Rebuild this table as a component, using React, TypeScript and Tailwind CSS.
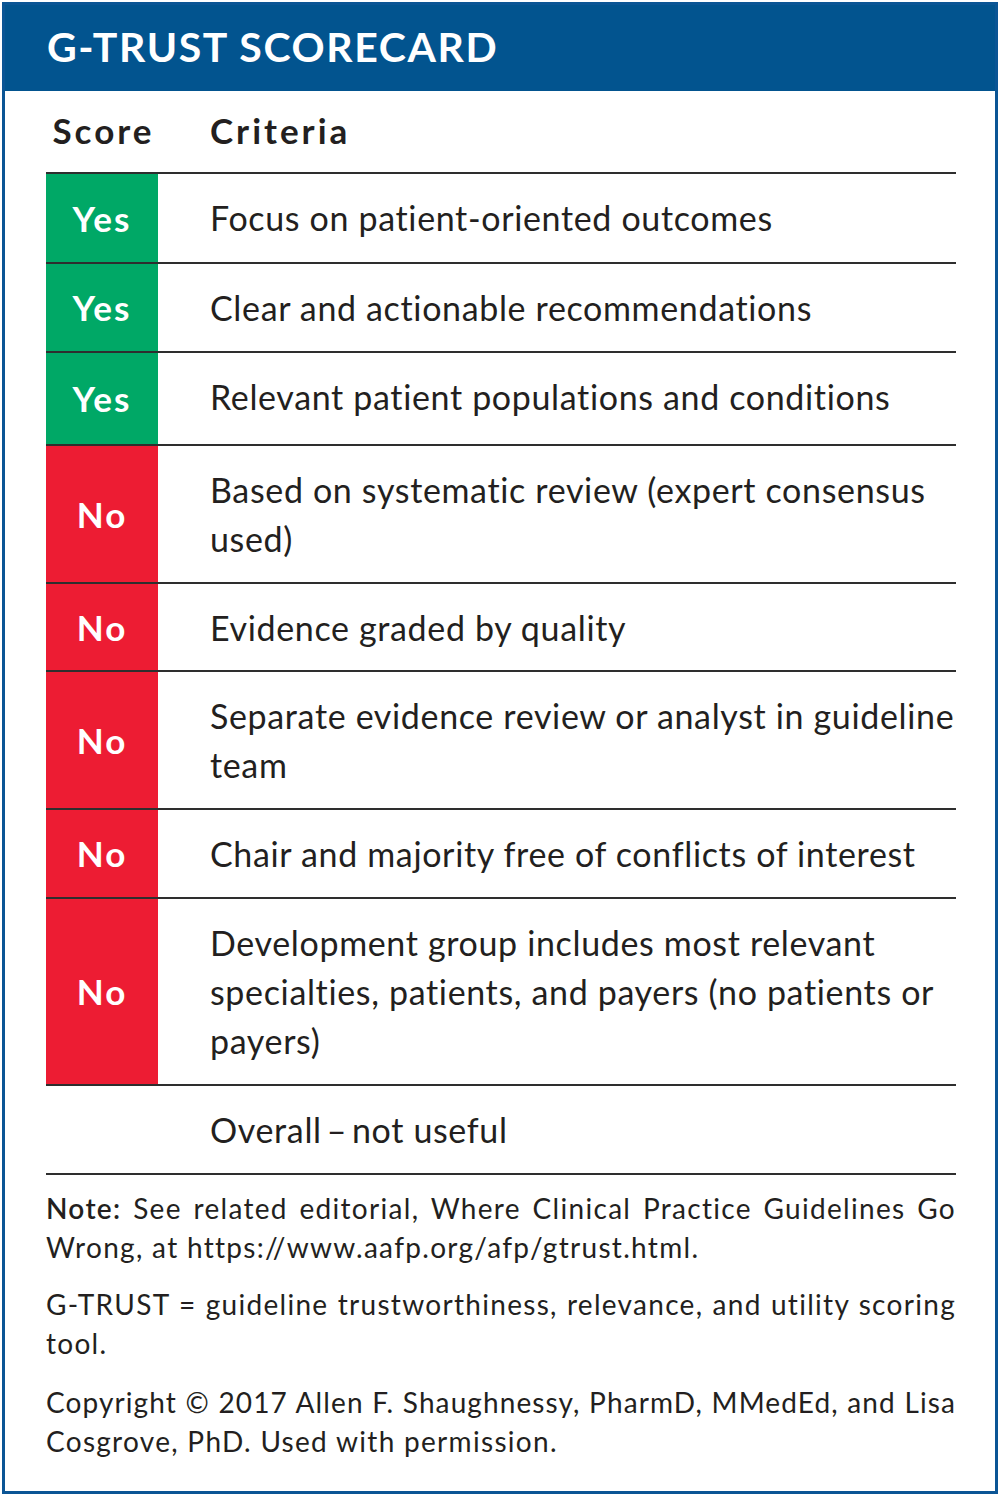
import React from "react";

type Row = { score: "Yes" | "No" | ""; lines: string[]; h: number };

const rows: Row[] = [
  { score: "Yes", lines: ["Focus on patient-oriented outcomes"], h: 90 },
  { score: "Yes", lines: ["Clear and actionable recommendations"], h: 89 },
  { score: "Yes", lines: ["Relevant patient populations and conditions"], h: 93 },
  { score: "No", lines: ["Based on systematic review (expert consensus", "used)"], h: 138 },
  { score: "No", lines: ["Evidence graded by quality"], h: 88 },
  { score: "No", lines: ["Separate evidence review or analyst in guideline", "team"], h: 138 },
  { score: "No", lines: ["Chair and majority free of conflicts of interest"], h: 89 },
  {
    score: "No",
    lines: [
      "Development group includes most relevant",
      "specialties, patients, and payers (no patients or",
      "payers)",
    ],
    h: 187,
  },
  { score: "", lines: ["Overall\u2009\u2013\u2009not useful"], h: 89 },
];

export default function App() {
  return (
    <div
      className="w-[1000px] h-[1496px] bg-white p-[2px]"
      style={{ fontFamily: "Lato, 'Open Sans', sans-serif" }}
    >
      <div className="h-full border-[3px] border-[#0b5595] flex flex-col">
        <div className="h-[86px] bg-[#02548f] pl-[42px] pt-[18px]">
          <h1 className="text-white font-bold text-[41px] leading-[48px] tracking-[1.6px] whitespace-nowrap">
            G-TRUST SCORECARD
          </h1>
        </div>
        <div className="pl-[41px] pr-[39px] text-[#231f20]">
          <div className="flex h-[81px] items-start pt-[17px] text-[35px] font-bold leading-[44px] tracking-[3px]">
            <div className="w-[112px] text-center pl-[3px]">Score</div>
            <div className="pl-[52px]">Criteria</div>
          </div>
          {rows.map((r, i) => (
            <div
              key={i}
              className="flex border-t-2 border-[#2e2e2e] box-border"
              style={{ height: r.h }}
            >
              <div
                className={
                  r.score === "Yes"
                    ? "w-[112px] shrink-0 bg-[#00a866] flex items-center justify-center text-white font-bold text-[35px] tracking-[2px]"
                    : r.score === "No"
                    ? "w-[112px] shrink-0 bg-[#ed1c33] flex items-center justify-center text-white font-bold text-[35px] tracking-[2px]"
                    : "w-[112px] shrink-0"
                }
              >
                {r.score}
              </div>
              <div className="pl-[52px] pt-[19px] text-[34px] leading-[49px] tracking-[0.65px]">
                {r.lines.map((l, j) => (
                  <div key={j} className="whitespace-nowrap">
                    {l}
                  </div>
                ))}
              </div>
            </div>
          ))}
          <div className="border-t-2 border-[#2e2e2e]" />
          <div className="pt-[14px] text-[28px] leading-[39px] tracking-[1.3px]">
            <div className="text-justify [text-align-last:justify] whitespace-nowrap">
              <span className="font-semibold">Note:</span> See related editorial, Where Clinical Practice Guidelines Go
            </div>
            <div className="whitespace-nowrap">Wrong, at https://www.aafp.org/afp/gtrust.html.</div>
            <div className="mt-[18px] text-justify [text-align-last:justify] whitespace-nowrap">
              G-TRUST = guideline trustworthiness, relevance, and utility scoring
            </div>
            <div>tool.</div>
            <div className="mt-[20px] text-justify [text-align-last:justify] whitespace-nowrap tracking-[1.1px]">
              Copyright © 2017 Allen F. Shaughnessy, PharmD, MMedEd, and Lisa
            </div>
            <div className="whitespace-nowrap">Cosgrove, PhD. Used with permission.</div>
          </div>
        </div>
      </div>
    </div>
  );
}
